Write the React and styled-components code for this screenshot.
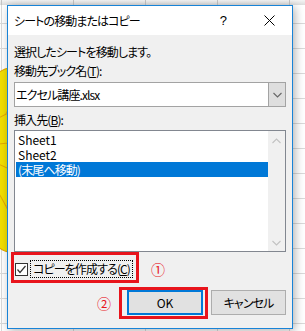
import React from 'react'
import styled, { createGlobalStyle, css } from 'styled-components'

const RED = '#e8141c'

const GlobalStyle = createGlobalStyle`
  html, body {
    margin: 0;
    padding: 0;
  }
  body {
    background: #fff;
    font-family: "Noto Sans CJK JP", "Noto Sans", sans-serif;
    font-feature-settings: "palt";
    letter-spacing: -0.9px;
    color: #000;
  }
`

// red annotation frame drawn over a control
const redFrame = (top, right, bottom, left) => css`
  position: relative;
  &::after {
    content: '';
    position: absolute;
    top: ${top}px;
    right: ${right}px;
    bottom: ${bottom}px;
    left: ${left}px;
    border: 3px solid ${RED};
    pointer-events: none;
  }
`

const Page = styled.div`
  width: 305px;
  height: 331px;
  overflow: hidden;
  display: flex;
  flex-direction: column;
`

const HeaderStrip = styled.div`
  height: 5px;
  flex: none;
  background:
    linear-gradient(90deg, #c4c4c4 1px, transparent 1px) 1px 0 / 72px 100%,
    linear-gradient(#f4f4f4, #dddddd);
`

const Sheet = styled.div`
  flex: 1;
  position: relative;
  padding-left: 7px;
  background:
    linear-gradient(#dadada 1px, transparent 1px) 0 18px / 100% 25px,
    linear-gradient(90deg, #dadada 1px, transparent 1px) 1px 0 / 72px 100%,
    #fff;
`

const Flower = styled.svg`
  position: absolute;
  left: 0;
  top: 0;
`

const Dialog = styled.div`
  position: relative;
  z-index: 1;
  width: 286px;
  height: 324px;
  box-sizing: border-box;
  border: 1px solid #1883d7;
  background: #f0f0f0;
  box-shadow: 2px 2px 9px rgba(0, 0, 0, 0.3);
  display: flex;
  flex-direction: column;
`

const TitleBar = styled.div`
  height: 29px;
  flex: none;
  background: #fff;
  display: flex;
  align-items: center;
`

const Title = styled.div`
  flex: 1;
  padding-left: 6px;
  font-size: 12px;
  line-height: 16px;
  margin-top: 1px;
`

const TitleButton = styled.div`
  width: 46px;
  height: 29px;
  display: flex;
  align-items: center;
  justify-content: center;
  font-size: 13px;
  font-family: "Liberation Sans", sans-serif;
`

const Body = styled.div`
  padding: 9px 6px 0 6px;
  display: flex;
  flex-direction: column;
`

const Text = styled.div`
  font-size: 12px;
  line-height: 16px;
  margin-top: ${({ $top }) => $top || 0}px;
`

const Combo = styled.div`
  margin-top: 3px;
  height: 25px;
  box-sizing: border-box;
  border: 1px solid #a3a3a3;
  background: #fff;
  display: flex;
`

const ComboText = styled.div`
  flex: 1;
  padding-left: 1px;
  font-size: 12px;
  line-height: 23px;
`

const ComboButton = styled.div`
  width: 16px;
  background: #dedede;
  border-left: 1px solid #a3a3a3;
  display: flex;
  align-items: center;
  justify-content: center;
`

const List = styled.div`
  margin-top: 2px;
  height: 122px;
  box-sizing: border-box;
  border: 1px solid #828790;
  background: #fff;
  display: flex;
`

const Items = styled.div`
  flex: 1;
  padding: 1px 0 0 1px;
`

const Item = styled.div`
  height: 15px;
  line-height: 15px;
  padding-left: 2px;
  font-size: 12px;
  letter-spacing: ${({ $latin }) => ($latin ? '0' : '-0.9px')};
  ${({ $selected }) =>
    $selected &&
    css`
      background: #0078d7;
      color: #fff;
    `}
`

const Scrollbar = styled.div`
  width: 17px;
  background: #f0f0f0;
  display: flex;
  flex-direction: column;
  align-items: center;
  justify-content: space-between;
  padding: 7px 0 5px;
`

const CheckLine = styled.div`
  margin-top: 8px;
  height: 18px;
  display: flex;
  align-items: center;
`

const CheckRow = styled.div`
  ${redFrame(-8, -6, -5, -4)}
  margin-left: 1px;
  height: 18px;
  display: flex;
  align-items: center;
`

const Box = styled.div`
  width: 13px;
  height: 13px;
  box-sizing: border-box;
  border: 1px solid #333;
  background: #fff;
  display: flex;
  align-items: center;
  justify-content: center;
`

const CheckLabel = styled.div`
  margin-left: 2px;
  height: 18px;
  box-sizing: border-box;
  border: 1px dotted #000;
  padding: 0 2px 0 2px;
  font-size: 12px;
  line-height: 16px;
`

const Mark = styled.span`
  color: ${RED};
  font-size: 14px;
  line-height: 16px;
  letter-spacing: 0;
  margin-left: ${({ $left }) => $left || 0}px;
  margin-right: ${({ $right }) => $right || 0}px;
`

const ButtonRow = styled.div`
  margin-top: 12px;
  display: flex;
  justify-content: flex-end;
  align-items: center;
`

const Button = styled.div`
  height: 25px;
  box-sizing: border-box;
  background: #e1e1e1;
  border: 1px solid #adadad;
  display: flex;
  align-items: center;
  justify-content: center;
  font-size: 12px;
  width: ${({ $w }) => $w}px;
  margin-left: ${({ $left }) => $left || 0}px;
`

const OkButton = styled(Button)`
  ${redFrame(-5, -7, -6, -10)}
  border: 2px solid #0078d7;
  letter-spacing: 0;
`

const Chevron = ({ up, color }) => (
  <svg width="9" height="6" viewBox="0 0 9 6">
    <polyline
      points={up ? '0.5,5 4.5,1 8.5,5' : '0.5,1 4.5,5 8.5,1'}
      fill="none"
      stroke={color}
      strokeWidth="1.1"
    />
  </svg>
)

// clip-art sunflower peeking out from behind the dialog
const Sunflower = () => (
  <Flower width="40" height="300" viewBox="0 0 40 300">
    {[0, 30, 60, 90, 120, 150, 180].map((a) => (
      <ellipse
        key={a}
        cx="-40"
        cy="100"
        rx="17"
        ry="50"
        fill="#f2de00"
        stroke="#e3a600"
        strokeWidth="1"
        transform={`rotate(${a} -40 155)`}
      />
    ))}
  </Flower>
)

export default function App() {
  return (
    <>
      <GlobalStyle />
      <Page>
        <HeaderStrip />
        <Sheet>
          <Sunflower />
          <Dialog>
            <TitleBar>
              <Title>シートの移動またはコピー</Title>
              <TitleButton>?</TitleButton>
              <TitleButton>
                <svg width="11" height="11" viewBox="0 0 11 11">
                  <path d="M0.5 0.5 L10.5 10.5 M10.5 0.5 L0.5 10.5" stroke="#000" strokeWidth="1" />
                </svg>
              </TitleButton>
            </TitleBar>
            <Body>
              <Text>選択したシートを移動します。</Text>
              <Text $top={3}>
                移動先ブック名(<u>T</u>):
              </Text>
              <Combo>
                <ComboText>エクセル講座.xlsx</ComboText>
                <ComboButton>
                  <Chevron color="#666" />
                </ComboButton>
              </Combo>
              <Text $top={5}>
                挿入先(<u>B</u>):
              </Text>
              <List>
                <Items>
                  <Item $latin>Sheet1</Item>
                  <Item $latin>Sheet2</Item>
                  <Item $selected>(末尾へ移動)</Item>
                </Items>
                <Scrollbar>
                  <Chevron up color="#c2c2c2" />
                  <Chevron color="#c2c2c2" />
                </Scrollbar>
              </List>
              <CheckLine>
                <CheckRow>
                  <Box>
                    <svg width="11" height="11" viewBox="0 0 11 11">
                      <polyline points="1.5,5.5 4,8.5 9.5,2" fill="none" stroke="#333" strokeWidth="1.2" />
                    </svg>
                  </Box>
                  <CheckLabel>
                    コピーを作成する(<u>C</u>)
                  </CheckLabel>
                </CheckRow>
                <Mark $left={18}>①</Mark>
              </CheckLine>
              <ButtonRow>
                <Mark $right={16}>②</Mark>
                <OkButton $w={76}>OK</OkButton>
                <Button $w={75} $left={8}>
                  キャンセル
                </Button>
              </ButtonRow>
            </Body>
          </Dialog>
        </Sheet>
      </Page>
    </>
  )
}
